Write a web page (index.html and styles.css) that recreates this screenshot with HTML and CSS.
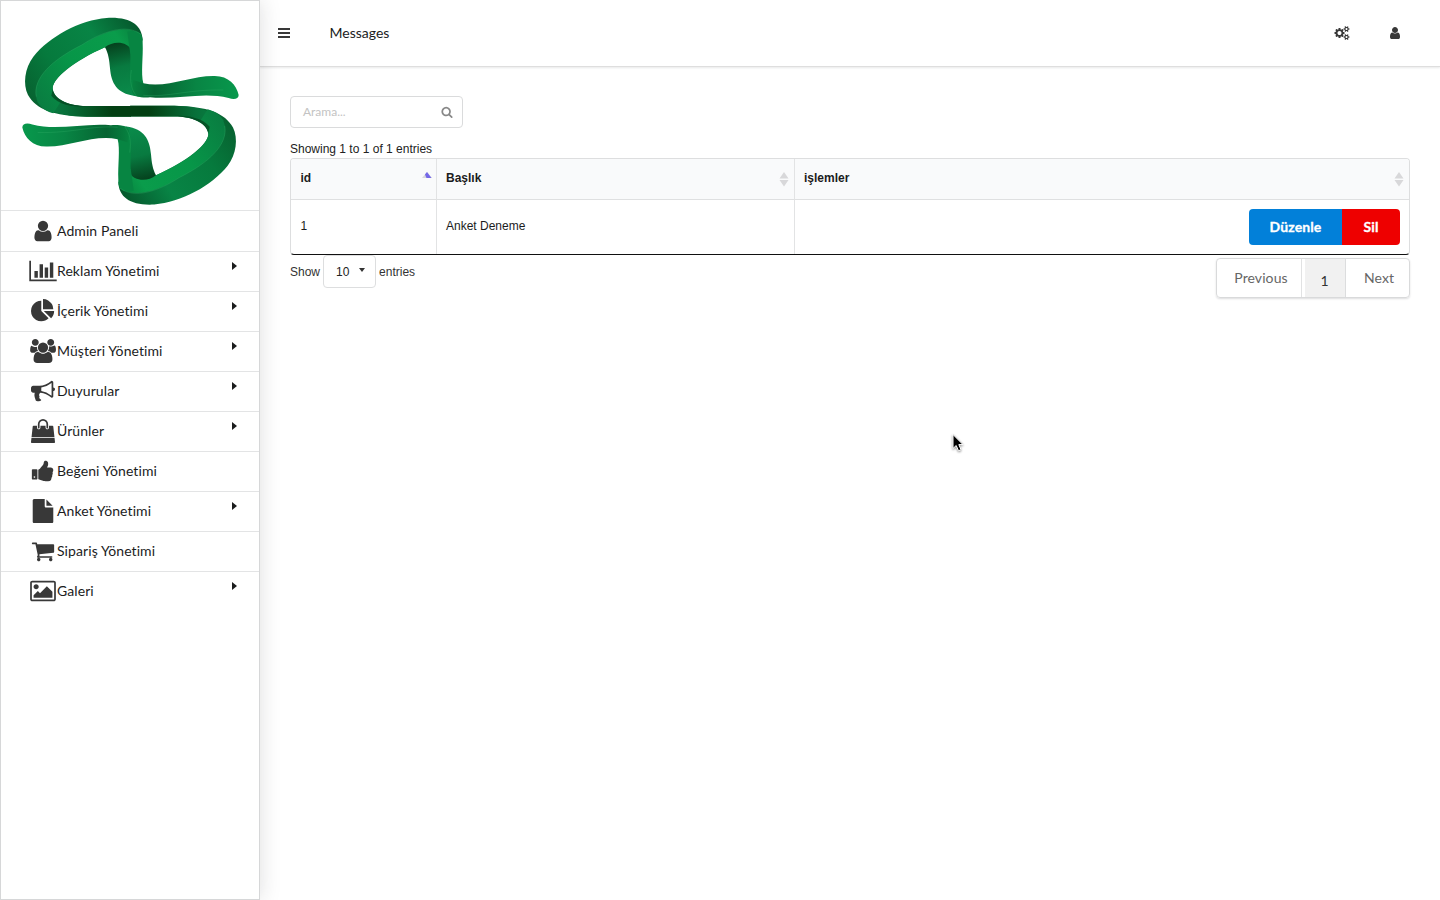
FILE: index.html
```
<!DOCTYPE html>
<html lang="tr">
<head>
<meta charset="utf-8">
<title>Messages</title>
<link rel="stylesheet" href="styles.css">
</head>
<body>
<svg class="defs" width="0" height="0">
  <symbol id="user" viewBox="0 0 1792 1792"><path d="M1536 1399q0 109-62.5 187t-150.5 78h-854q-88 0-150.5-78t-62.5-187q0-85 8.5-160.5t31.5-152 58.5-131 94-89 134.5-34.5q131 128 313 128t313-128q76 0 134.5 34.5t94 89 58.5 131 31.5 152 8.5 160.5zm-256-887q0 159-112.5 271.5t-271.5 112.5-271.5-112.5-112.5-271.5 112.5-271.5 271.5-112.5 271.5 112.5 112.5 271.5z"/></symbol>
  <symbol id="chart" viewBox="0 0 2048 1792"><path d="M640 896v512h-256v-512h256zm384-512v1024h-256v-1024h256zm1024 1152v128h-2048v-1536h128v1408h1920zm-640-896v768h-256v-768h256zm384-384v1152h-256v-1152h256z"/></symbol>
  <symbol id="pie" viewBox="0 0 1792 1792"><path d="M768 890l546 546q-106 108-247.5 168t-298.5 60q-209 0-385.5-103t-279.5-279.5-103-385.5 103-385.5 279.5-279.5 385.5-103v762zm187 6h773q0 157-60 298.5t-168 247.5zm709-128h-768v-768q209 0 385.5 103t279.5 279.5 103 385.5z"/></symbol>
  <symbol id="users" viewBox="0 0 1920 1792"><path d="M593 896q-162 5-265 128h-134q-82 0-138-40.5t-56-118.5q0-353 124-353 6 0 43.5 21t97.5 42.5 119 21.5q67 0 133-23-5 37-5 66 0 159 81 256zm1071 637q0 120-73 189.5t-194 69.5h-874q-121 0-194-69.5t-73-189.5q0-53 3.5-103.5t14-109 26.5-108.5 43-97.5 62-81 85.5-53.5 111.5-20q10 0 43 21.5t73 48 107 48 135 21.5 135-21.5 107-48 73-48 43-21.5q61 0 111.5 20t85.5 53.5 62 81 43 97.5 26.5 108.5 14 109 3.5 103.5zm-1024-1277q0 106-75 181t-181 75-181-75-75-181 75-181 181-75 181 75 75 181zm704 384q0 159-112.5 271.5t-271.5 112.5-271.5-112.5-112.5-271.5 112.5-271.5 271.5-112.5 271.5 112.5 112.5 271.5zm576 225q0 78-56 118.5t-138 40.5h-134q-103-123-265-128 90-128 90-287 0-29-5-66 66 23 133 23 59 0 119-21.5t97.5-42.5 43.5-21q124 0 124 353zm-128-609q0 106-75 181t-181 75-181-75-75-181 75-181 181-75 181 75 75 181z"/></symbol>
  <symbol id="horn" viewBox="0 0 1792 1792"><path d="M1664 640q53 0 90.5 37.5t37.5 90.5-37.5 90.5-90.5 37.5v384q0 52-38 90t-90 38q-417-347-812-380-58 19-91 66t-31 100.5 40 92.5q-20 33-23 65.5t6 58 33.5 55 48 50 61.5 50.5q-29 58-111.5 83t-168.5 11.5-132-55.5q-7-23-29.5-87.5t-32-94.5-23-89-15-101 3.5-98.5 22-110.5h-122q-66 0-113-47t-47-113v-192q0-66 47-113t113-47h480q435 0 896-384 52 0 90 38t38 90v384zm-128 604v-954q-394 302-768 343v270q377 42 768 341z"/></symbol>
  <symbol id="bag" viewBox="0 0 1792 1792"><path d="M1757 1408l35 313q3 28-16 50-19 21-48 21h-1664q-29 0-48-21-19-22-16-50l35-313h1722zm-93-839l86 775h-1708l86-775q3-24 21-40.5t43-16.5h256v128q0 53 37.5 90.5t90.5 37.5 90.5-37.5 37.5-90.5v-128h384v128q0 53 37.5 90.5t90.5 37.5 90.5-37.5 37.5-90.5v-128h256q25 0 43 16.5t21 40.5zm-384-185v256q0 26-19 45t-45 19-45-19-19-45v-256q0-106-75-181t-181-75-181 75-75 181v256q0 26-19 45t-45 19-45-19-19-45v-256q0-159 112.5-271.5t271.5-112.5 271.5 112.5 112.5 271.5z"/></symbol>
  <symbol id="thumb" viewBox="0 0 1792 1792"><path d="M320 1344q0-26-19-45t-45-19q-27 0-45.5 19t-18.5 45q0 27 18.5 45.5t45.5 18.5q26 0 45-18.5t19-45.5zm160-512v640q0 26-19 45t-45 19h-288q-26 0-45-19t-19-45v-640q0-26 19-45t45-19h288q26 0 45 19t19 45zm1184 0q0 86-55 149 15 44 15 76 3 76-43 137 17 56 0 117-15 57-54 94 9 112-49 181-64 76-197 78h-129q-66 0-144-15.5t-121.5-29-120.5-39.5q-123-43-158-44-26-1-45-19.5t-19-44.5v-641q0-25 18-43.5t43-20.5q24-2 76-59t101-121q68-87 101-120 18-18 31-48t17.5-48.5 13.5-60.5q7-39 12.5-61t19.5-52 34-50q19-19 45-19 46 0 82.5 10.5t60 26 40 40.5 24 45 12 50 5 45 .5 39q0 38-9.5 76t-19 60-27.5 56q-3 6-10 18t-11 22-8 24h277q78 0 135 57t57 135z"/></symbol>
  <symbol id="file" viewBox="0 0 1792 1792"><path d="M1152 512v-472q22 14 36 28l408 408q14 14 28 36h-472zm-128 32q0 40 28 68t68 28h544v1056q0 40-28 68t-68 28h-1344q-40 0-68-28t-28-68v-1600q0-40 28-68t68-28h800v544z"/></symbol>
  <symbol id="cart" viewBox="0 0 1792 1792"><path d="M704 1536q0 52-38 90t-90 38-90-38-38-90 38-90 90-38 90 38 38 90zm896 0q0 52-38 90t-90 38-90-38-38-90 38-90 90-38 90 38 38 90zm128-1088v512q0 24-16.5 42.5t-40.5 21.5l-1044 122q13 60 13 70 0 16-24 64h920q26 0 45 19t19 45-19 45-45 19h-1024q-26 0-45-19t-19-45q0-11 8-31.5t16-36 21.5-40 15.5-29.5l-177-823h-204q-26 0-45-19t-19-45 19-45 45-19h256q16 0 28.5 6.5t19.5 15.5 13 24.5 8 26 5.5 29.5 4.5 26h1201q26 0 45 19t19 45z"/></symbol>
  <symbol id="image" viewBox="0 0 1920 1792"><path d="M640 576q0 80-56 136t-136 56-136-56-56-136 56-136 136-56 136 56 56 136zm1024 384v448h-1408v-192l320-320 160 160 512-512zm96-704h-1600q-13 0-22.5 9.5t-9.5 22.5v1216q0 13 9.5 22.5t22.5 9.5h1600q13 0 22.5-9.5t9.5-22.5v-1216q0-13-9.5-22.5t-22.5-9.5zm160 32v1216q0 66-47 113t-113 47h-1600q-66 0-113-47t-47-113v-1216q0-66 47-113t113-47h1600q66 0 113 47t47 113z"/></symbol>
  <symbol id="search" viewBox="0 0 1792 1792"><path d="M1216 832q0-185-131.5-316.5t-316.5-131.5-316.5 131.5-131.5 316.5 131.5 316.5 316.5 131.5 316.5-131.5 131.5-316.5zm512 832q0 52-38 90t-90 38q-54 0-90-38l-343-342q-179 124-399 124-143 0-273.5-55.5t-225-150-150-225-55.5-273.5 55.5-273.5 150-225 225-150 273.5-55.5 273.5 55.5 225 150 150 225 55.5 273.5q0 220-124 399l343 343q37 37 37 90z"/></symbol>
  <symbol id="cogs" viewBox="0 0 1920 1792"><path d="M896 896q0-106-75-181t-181-75-181 75-75 181 75 181 181 75 181-75 75-181zm768 512q0-52-38-90t-90-38-90 38-38 90q0 53 37.5 90.5t90.5 37.5 90.5-37.5 37.5-90.5zm0-1024q0-52-38-90t-90-38-90 38-38 90q0 53 37.5 90.5t90.5 37.5 90.5-37.5 37.5-90.5zm-384 421v185q0 10-7 19.5t-16 10.5l-155 24q-11 35-32 76 34 48 90 115 7 11 7 20 0 12-7 19-23 30-82.5 89.5t-78.5 59.5q-11 0-21-7l-115-90q-37 19-77 31-11 108-23 155-7 24-30 24h-186q-11 0-20-7.5t-10-17.5l-23-153q-34-10-75-31l-118 89q-7 7-20 7-11 0-21-8-144-133-144-160 0-9 7-19 10-14 41-53t47-61q-23-44-35-82l-152-24q-10-1-17-9.5t-7-19.5v-185q0-10 7-19.5t16-10.5l155-24q11-35 32-76-34-48-90-115-7-11-7-20 0-12 7-20 22-30 82-89t79-59q11 0 21 7l115 90q34-18 77-32 11-108 23-154 7-24 30-24h186q11 0 20 7.5t10 17.5l23 153q34 10 75 31l118-89q8-7 20-7 11 0 21 8 144 133 144 160 0 8-7 19-12 16-42 54t-45 60q23 48 34 82l152 23q10 2 17 10.5t7 19.5zm640 533v140q0 16-149 31-12 27-30 52 51 113 51 138 0 4-4 7-122 71-124 71-8 0-46-47t-52-68q-20 2-30 2t-30-2q-14 21-52 68t-46 47q-2 0-124-71-4-3-4-7 0-25 51-138-18-25-30-52-149-15-149-31v-140q0-16 149-31 13-29 30-52-51-113-51-138 0-4 4-7 4-2 35-20t59-34 30-16q8 0 46 46.5t52 67.5q20-2 30-2t30 2q51-71 92-112l6-2q4 0 124 70 4 3 4 7 0 25-51 138 17 23 30 52 149 15 149 31zm0-1024v140q0 16-149 31-12 27-30 52 51 113 51 138 0 4-4 7-122 71-124 71-8 0-46-47t-52-68q-20 2-30 2t-30-2q-14 21-52 68t-46 47q-2 0-124-71-4-3-4-7 0-25 51-138-18-25-30-52-149-15-149-31v-140q0-16 149-31 13-29 30-52-51-113-51-138 0-4 4-7 4-2 35-20t59-34 30-16q8 0 46 46.5t52 67.5q20-2 30-2t30 2q51-71 92-112l6-2q4 0 124 70 4 3 4 7 0 25-51 138 17 23 30 52 149 15 149 31z"/></symbol>
</svg>
<div class="app">
  <nav class="sidebar">
    <div class="logo">
      <svg width="258" height="209" viewBox="3 3 774 627">
        <defs>
          <linearGradient id="body" gradientUnits="userSpaceOnUse" x1="80" y1="300" x2="430" y2="60"><stop offset="0" stop-color="#07602f"/><stop offset=".3" stop-color="#067a3d"/><stop offset=".65" stop-color="#088445"/><stop offset="1" stop-color="#055028"/></linearGradient>
          <linearGradient id="face" gradientUnits="userSpaceOnUse" x1="110" y1="300" x2="430" y2="90"><stop offset="0" stop-color="#097d41"/><stop offset=".4" stop-color="#079648"/><stop offset=".8" stop-color="#0a9c4b"/><stop offset="1" stop-color="#077b3b"/></linearGradient>
          <linearGradient id="fall" gradientUnits="userSpaceOnUse" x1="350" y1="125" x2="390" y2="290"><stop offset="0" stop-color="#053f1c"/><stop offset=".45" stop-color="#087a40"/><stop offset="1" stop-color="#0a8c4b"/></linearGradient>
          <linearGradient id="tail" gradientUnits="userSpaceOnUse" x1="400" y1="0" x2="716" y2="0"><stop offset="0" stop-color="#07803f"/><stop offset=".2" stop-color="#066432"/><stop offset=".6" stop-color="#088544"/><stop offset="1" stop-color="#08984c"/></linearGradient>
          <linearGradient id="bar" gradientUnits="userSpaceOnUse" x1="112" y1="0" x2="671" y2="0"><stop offset="0" stop-color="#088544"/><stop offset=".15" stop-color="#08703a"/><stop offset=".4" stop-color="#033f13"/><stop offset=".6" stop-color="#033f13"/><stop offset=".85" stop-color="#08703a"/><stop offset="1" stop-color="#088544"/></linearGradient>
          <g id="half">
            <path fill="url(#body)" d="M392 350H260C160 348 108 328 84 285C68 252 74 205 100 170C148 110 240 60 320 54C390 50 426 75 428 120L400 160L315 142C220 184 160 235 158 264C160 295 200 318 260 318H392Z"/>
            <path fill="url(#bar)" d="M392 350H260C190 348 135 332 112 305L158 270C160 298 205 318 260 318H393V350Z"/>
            <path fill="url(#face)" d="M425 105C380 70 310 95 245 135C155 180 100 235 108 288C112 315 130 332 160 340L182 305C165 295 158 280 158 264C162 230 222 182 315 142C350 122 400 130 400 165Z"/>
            <path fill="url(#fall)" d="M315 142C340 120 385 125 392 150L404 288C350 280 334 250 330 205C328 180 325 160 315 142Z"/>
            <path fill="#078542" d="M382 95C415 88 430 100 428 130C430 170 422 220 430 250L435 291Q415 292 402 287C380 240 395 190 390 155Z"/>
            <path fill="url(#tail)" d="M400 240L430 250C500 265 570 228 640 228C684 226 709 254 716 285C716 297 702 300 686 294C610 274 530 300 450 292C420 295 400 286 396 275Z"/>
            <path class="edge" d="M424 104C380 68 305 96 245 135C155 180 98 235 109 290M430 286C510 292 560 268 670 270M394 210C388 245 395 270 408 286"/>
            <path class="shade" d="M158 268C164 298 200 316 260 320C215 320 175 314 154 287Z"/>
          </g>
        </defs>
        <use href="#half"/>
        <use href="#half" transform="rotate(180 391.5 333.8)"/>
      </svg>
    </div>
    <a class="item"><svg class="icon"><use href="#user"/></svg>Admin Paneli</a>
    <a class="item"><svg class="icon"><use href="#chart"/></svg>Reklam Yönetimi<i class="caret"></i></a>
    <a class="item"><svg class="icon"><use href="#pie"/></svg>İçerik Yönetimi<i class="caret"></i></a>
    <a class="item"><svg class="icon"><use href="#users"/></svg>Müşteri Yönetimi<i class="caret"></i></a>
    <a class="item"><svg class="icon"><use href="#horn"/></svg>Duyurular<i class="caret"></i></a>
    <a class="item"><svg class="icon"><use href="#bag"/></svg>Ürünler<i class="caret"></i></a>
    <a class="item"><svg class="icon"><use href="#thumb"/></svg>Beğeni Yönetimi</a>
    <a class="item"><svg class="icon"><use href="#file"/></svg>Anket Yönetimi<i class="caret"></i></a>
    <a class="item"><svg class="icon"><use href="#cart"/></svg>Sipariş Yönetimi</a>
    <a class="item"><svg class="icon"><use href="#image"/></svg>Galeri<i class="caret"></i></a>
  </nav>
  <div class="main">
    <header class="topbar">
      <svg class="bars" width="12" height="10"><path d="M0 0h12v2H0zM0 4h12v2H0zM0 8h12v2H0z"/></svg>
      <span class="title">Messages</span>
      <svg class="cogs"><use href="#cogs"/></svg>
      <svg class="me"><use href="#user"/></svg>
    </header>
    <main class="content">
      <div class="search"><span>Arama...</span><svg><use href="#search"/></svg></div>
      <div class="info">Showing 1 to 1 of 1 entries</div>
      <div class="table">
        <div class="cell head">id<svg class="sort up" width="10" height="14"><path d="M5 0L10 6H0z" fill="#d8d8dc"/><path d="M5 0L9.500 6H4.500L3 2.500z" fill="#7468e8"/></svg></div>
        <div class="cell head">Başlık<svg class="sort" width="10" height="14"><path d="M5 0L9.500 6.500H.5zM.5 8h9L5 14.500z" fill="#d8d8da"/></svg></div>
        <div class="cell head">işlemler<svg class="sort" width="10" height="14"><path d="M5 0L9.500 6.500H.5zM.5 8h9L5 14.500z" fill="#d8d8da"/></svg></div>
        <div class="cell">1</div>
        <div class="cell">Anket Deneme</div>
        <div class="cell actions"><div class="buttons"><a class="edit">Düzenle</a><a class="delete">Sil</a></div></div>
      </div>
      <div class="footer">
        <div class="length"><span>Show</span><span class="select">10<i></i></span><span>entries</span></div>
        <div class="pages"><a class="prev">Previous</a><a class="current">1</a><a class="next">Next</a></div>
      </div>
    </main>
  </div>
</div>
<svg class="cursor" width="16" height="22" viewBox="0 0 16 22"><path d="M2 1.500V15.500L5.200 12.500L7.500 17.800L10 16.700L7.800 11.600H12Z"/></svg>
</body>
</html>
```
FILE: styles.css
```
* { box-sizing: border-box; }
body { margin: 0; background: #fff; color: rgba(0,0,0,.87); font: 14px/20px Lato, sans-serif; overflow: hidden; }
.defs { position: absolute; }
.app { display: flex; height: 900px; }
.sidebar { width: 260px; flex: none; border: 1px solid #d6d7d8; background: #fff; box-shadow: 0 0 20px rgba(34,36,38,.15); position: relative; z-index: 2; }
.logo { height: 209px; }
.logo svg { display: block; }
.edge { fill: none; stroke: #35b36d; stroke-width: 1.5; opacity: .6; }
.shade { fill: #04401d; opacity: .7; }
.item { display: flex; align-items: center; height: 40px; padding: 0 22px 2px 28px; border-top: 1px solid #e3e4e5; color: #1b1c1d; letter-spacing: .08px; font-variant-ligatures: none; }
.item:nth-child(2) { height: 41px; padding-bottom: 0; }
.icon { width: 28px; height: 24px; fill: #383838; flex: none; }
.caret { margin: -10px 0 0 auto; border: solid transparent; border-width: 4px 0 4px 5px; border-left-color: #1b1c1d; }
.main { flex: 1; min-width: 0; }
.topbar { display: flex; align-items: center; height: 67px; padding: 0 38px 0 18px; border-bottom: 1px solid #dedede; box-shadow: 0 1px 2px rgba(34,36,38,.1); fill: #383838; color: #1b1c1d; }
.title { margin-left: 39.5px; }
.cogs { width: 16px; height: 14px; margin-left: auto; }
.me { width: 14px; height: 14px; margin-left: 38.5px; }
.content { padding: 29px 30px 0; font: 12px/16px "Liberation Sans", Arial, sans-serif; color: #222; }
.search { display: flex; align-items: center; justify-content: space-between; width: 173px; height: 32px; padding: 0 9px 0 12px; border: 1px solid #dadbdc; border-radius: 4px; color: #c3c3c3; font-family: Lato, sans-serif; }
.search svg { width: 12px; height: 12px; fill: #888; }
.info { margin-top: 13px; height: 17px; }
.table { display: grid; grid-template: 41px 55px / 146px 358px 1fr; height: 97px; border: 1px solid #dddedf; border-bottom-color: #111; border-radius: 4px; overflow: hidden; color: #1b1c1d; }
.cell { display: flex; align-items: center; padding: 0 9px 3px; border-right: 1px solid #e2e3e4; }
.cell:nth-child(3n) { border-right: 0; }
.cell:nth-child(3n+1) { padding-left: 9.5px; }
.head { justify-content: space-between; padding: 0 5px 2px 9px; border-bottom: 1px solid #dfe0e1; background: #f9fafb; font-weight: bold; }
.sort { margin-top: 2px; overflow: visible; }
.actions { justify-content: flex-end; padding-bottom: 1px; }
.up { margin-right: -.5px; }
.buttons { display: flex; height: 36px; border-radius: 4px; overflow: hidden; font: bold 14px/35px Lato, sans-serif; color: #fff; text-align: center; letter-spacing: .1px; -webkit-text-stroke: .3px #fff; }
.edit { width: 93px; background: #0280d9; }
.delete { width: 58px; background: #ee0000; }
.footer { display: flex; justify-content: space-between; }
.length { display: flex; align-items: center; gap: 3px; height: 33px; color: #333; }
.select { display: flex; justify-content: space-between; align-items: center; width: 53px; height: 33px; padding: 0 10px 0 12px; border: 1px solid #dddedf; border-radius: 4px; color: #222; }
.select i { margin-top: -3px; border: solid transparent; border-width: 4px 3.500px 0; border-top-color: #333; }
.pages { display: flex; width: 194px; height: 40px; margin-top: 3px; border: 1px solid #d9dadb; border-radius: 4px; box-shadow: 0 1px 2px rgba(34,36,38,.15); font: 14px/37px Lato, sans-serif; color: #666; text-align: center; letter-spacing: .08px; }
.prev { width: 85px; margin-right: 3px; padding-left: 4px; border-right: 1px solid #e1e2e3; }
.current { width: 41px; padding: 3px 1px 0 0; border-right: 1px solid #dcddde; background: #f1f1f1; color: #333; line-height: 38px; }
.next { flex: 1; padding-left: 3px; }
.cursor { position: absolute; left: 950.5px; top: 433px; fill: #000; stroke: #fff; filter: drop-shadow(0 1px 1px rgba(0,0,0,.45)); }
```
